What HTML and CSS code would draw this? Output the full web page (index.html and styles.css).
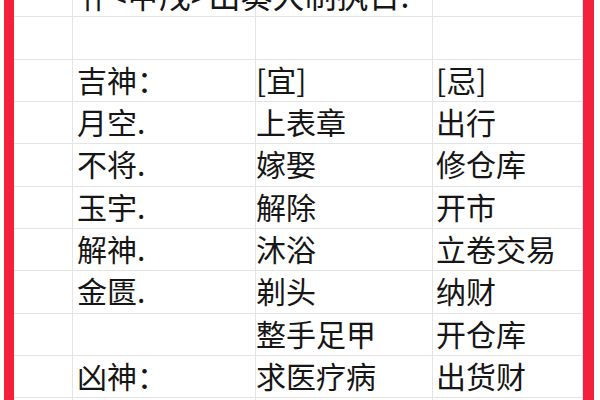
FILE: index.html
```html
<!DOCTYPE html>
<html lang="zh-CN">
<head>
<meta charset="utf-8">
<title>吉神 宜忌</title>
<link rel="stylesheet" href="styles.css">
</head>
<body>
<div class="sheet">
  <div class="frame">
    <div class="grid">
      <div class="cell"></div>
      <div class="cell c2 title"><span class="big">卄&lt;甲戌&gt;出奏大制执日.</span></div>
      <div class="cell c3"></div>
      <div class="cell c4"></div>

      <div class="cell"></div>
      <div class="cell c2"></div>
      <div class="cell c3"></div>
      <div class="cell c4"></div>

      <div class="cell"></div>
      <div class="cell c2">吉神：</div>
      <div class="cell c3">[宜]</div>
      <div class="cell c4">[忌]</div>

      <div class="cell"></div>
      <div class="cell c2">月空.</div>
      <div class="cell c3">上表章</div>
      <div class="cell c4">出行</div>

      <div class="cell"></div>
      <div class="cell c2">不将.</div>
      <div class="cell c3">嫁娶</div>
      <div class="cell c4">修仓库</div>

      <div class="cell"></div>
      <div class="cell c2">玉宇.</div>
      <div class="cell c3">解除</div>
      <div class="cell c4">开市</div>

      <div class="cell"></div>
      <div class="cell c2">解神.</div>
      <div class="cell c3">沐浴</div>
      <div class="cell c4">立卷交易</div>

      <div class="cell"></div>
      <div class="cell c2">金匮.</div>
      <div class="cell c3">剃头</div>
      <div class="cell c4">纳财</div>

      <div class="cell"></div>
      <div class="cell c2"></div>
      <div class="cell c3">整手足甲</div>
      <div class="cell c4">开仓库</div>

      <div class="cell"></div>
      <div class="cell c2">凶神：</div>
      <div class="cell c3">求医疗病</div>
      <div class="cell c4">出货财</div>

      <div class="cell"></div>
      <div class="cell c2"></div>
      <div class="cell c3"></div>
      <div class="cell c4"></div>
    </div>
  </div>
</div>
</body>
</html>
```

FILE: styles.css
```css
html, body {
  margin: 0;
  padding: 0;
  background: #ffffff;
}

.sheet {
  width: 600px;
  height: 400px;
  overflow: hidden;
  padding-left: 4px;
  box-sizing: border-box;
  background: #ffffff;
}

.frame {
  width: 590px;
  height: 400px;
  box-sizing: border-box;
  border-left: 10px solid #f4213c;
  border-right: 11px solid #f4213c;
  overflow: hidden;
}

.grid {
  margin-top: -25px;
  display: grid;
  grid-template-columns: 59px 183px 177px 150px;
  grid-auto-rows: 42.33px;
  font-family: "Noto Sans CJK SC", "Noto Sans", sans-serif;
  font-size: 30px;
  color: #161616;
}

.cell {
  box-sizing: border-box;
  border-right: 1px solid #e4e4e4;
  border-bottom: 1px solid #e4e4e4;
  display: flex;
  align-items: center;
  white-space: nowrap;
  line-height: 30px;
  padding-bottom: 3px;
}

.c2 {
  padding-left: 4px;
}

.c3 {
  padding-left: 0;
}

.c4 {
  padding-left: 3px;
}

.title {
  overflow: visible;
  position: relative;
  z-index: 1;
}

.big {
  font-size: 32px;
  line-height: 32px;
}
```
